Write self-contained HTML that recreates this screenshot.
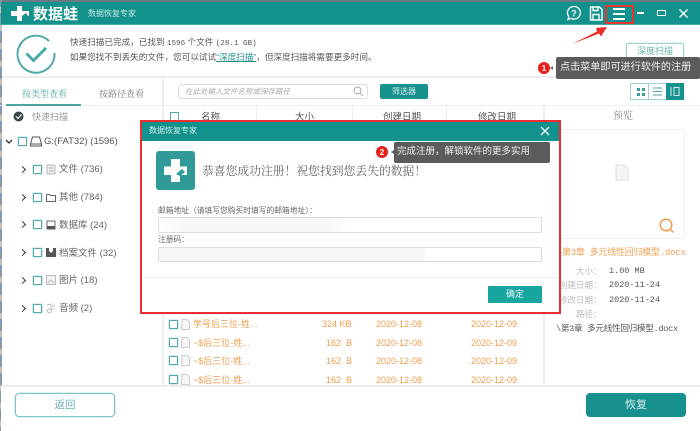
<!DOCTYPE html>
<html lang="zh-CN"><head><meta charset="utf-8"><style>
*{box-sizing:border-box;margin:0;padding:0}
html,body{width:700px;height:431px;overflow:hidden;background:#fff}
body{position:relative;font-family:"Liberation Sans","Noto Sans CJK SC",sans-serif;color:#666;font-size:9px;line-height:1}
#w{position:absolute;left:0;top:0;width:700px;height:431px;filter:blur(.3px);background:#fff}
.a{position:absolute;white-space:nowrap}
.cb{position:absolute;width:9px;height:9px;border:1px solid #4fabab;box-shadow:0 0 0 .6px rgba(107,185,185,.4);border-radius:1px;background:#fff}
.or{color:#ee9d4e;font-size:9px}
.arrow{position:absolute;width:5px;height:5px;border-right:1.5px solid #333;border-top:1.5px solid #333;transform:rotate(45deg)}
.line{position:absolute;background:#eee}
svg{position:absolute;overflow:visible}
</style></head><body><div id="w">
<div class="a" style="left:0;top:0;width:700px;height:2px;background:#6c7a84"></div>
<div class="a" style="left:0;top:0;width:1.5px;height:431px;background:repeating-linear-gradient(180deg,#8a98a4 0 7px,#c9c2b8 7px 13px,#7d9cc0 13px 18px)"></div>
<div class="a" style="left:1px;top:2px;width:699px;height:22px;background:#12918d"></div>
<div class="a" style="left:1px;top:24px;width:699px;height:1px;background:#3ea9a5"></div>
<svg style="left:10px;top:5px" width="20" height="17" viewBox="0 0 20 17"><path d="M7 1h5v5h7v5h-7v5H7v-5H1V6h6z" fill="#fff"/><path d="M12 11l4-3 2 3-3 3z" fill="#12918d"/></svg>
<div class="a" style="left:33px;top:6px;font-size:15px;font-weight:bold;color:#fff;line-height:17px">数据蛙</div>
<div class="a" style="left:88px;top:9px;font-size:8px;color:#c5e7e5;line-height:9px">数据恢复专家</div>
<svg style="left:566px;top:5px" width="16" height="16" viewBox="0 0 16 16"><path d="M8 1.5a6.3 6.3 0 1 1-3 11.8L2 14.5l.7-3A6.3 6.3 0 0 1 8 1.5z" fill="none" stroke="#fff" stroke-width="1.3"/><text x="8" y="11.5" text-anchor="middle" font-size="9" font-weight="bold" fill="#fff" font-family="Liberation Sans">?</text></svg>
<svg style="left:589px;top:6px" width="14" height="15" viewBox="0 0 14 15"><path d="M1.5 1h9l2.5 2.5V14H1.5zM4 1v3.5h5V1M4 14V8.5h6V14" fill="none" stroke="#fff" stroke-width="1.4"/></svg>
<div class="a" style="left:605px;top:5px;width:29px;height:19px;border:2px solid #e8332f"></div>
<div class="a" style="left:613px;top:8px;width:12px;height:1.5px;background:#fff"></div>
<div class="a" style="left:613px;top:13px;width:12px;height:1.5px;background:#fff"></div>
<div class="a" style="left:613px;top:18px;width:12px;height:1.5px;background:#fff"></div>
<div class="a" style="left:637px;top:12px;width:7px;height:2px;background:#fff"></div>
<div class="a" style="left:657px;top:10px;width:9px;height:6px;border:1.5px solid #fff"></div>
<svg style="left:679px;top:9px" width="9" height="9" viewBox="0 0 9 9"><path d="M.5.5l8 8m0-8l-8 8" stroke="#fff" stroke-width="1.3"/></svg>
<svg style="left:570px;top:22px" width="40" height="24" viewBox="0 0 40 24"><path d="M2 22L27 9.500l-1-3.500L37 5l-6 9.500-2-3z" fill="#ec2e28"/></svg>

<svg style="left:15px;top:33px" width="42" height="42" viewBox="0 0 42 42"><path d="M34 8A18.500 18.500 0 1 0 39.500 20" fill="none" stroke="#4ba9a8" stroke-width="2"/><path d="M11.500 20.500l7 7L31 15" fill="none" stroke="#4ba9a8" stroke-width="3"/></svg>
<div class="a" style="left:70px;top:37px;font-size:8.6px;line-height:10px;color:#555">快速扫描已完成，已找到 <span style="font-family:'Liberation Mono';font-size:7.6px">1596</span> 个文件 <span style="font-family:'Liberation Mono';font-size:7.6px">(28.1 GB)</span></div>
<div class="a" style="left:70px;top:52px;font-size:8.6px;line-height:10px;color:#555">如果您找不到丢失的文件，您可以试试<span style="color:#1f908c;text-decoration:underline">“深度扫描”</span>，但深度扫描将需要更多时间。</div>
<div class="a" style="left:626px;top:43px;width:58px;height:16px;border:1px solid #9fd2d1;box-shadow:0 0 0 .5px rgba(159,210,209,.5);border-radius:2px;text-align:center;line-height:14px;font-size:9px;color:#6cb3b1">深度扫描</div>

<div class="line" style="left:2px;top:76px;width:698px;height:2px"></div>
<div class="line" style="left:162px;top:78px;width:2px;height:308px"></div>
<svg style="left:537px;top:61px" width="20" height="14" viewBox="0 0 20 14"><circle cx="7" cy="7" r="6" fill="#e71f1b"/><text x="7" y="10" font-size="8" font-weight="bold" fill="#fff" text-anchor="middle" font-family="Liberation Sans">1</text><path d="M16 5l-3 2 3 2z" fill="#666"/></svg>
<div class="a" style="left:556px;top:57px;width:144px;height:22px;background:#5b5b5b;border-radius:2px;color:#f1f1f1;font-size:10.1px;line-height:21px;padding-left:4px">点击菜单即可进行软件的注册</div>

<div class="a" style="left:22px;top:89px;font-size:9px;line-height:11px;color:#4ea5a3;font-family:'Liberation Serif','Noto Serif CJK SC',serif">按类型查看</div>
<div class="a" style="left:99px;top:89px;font-size:9px;line-height:11px;color:#777;font-family:'Liberation Serif','Noto Serif CJK SC',serif">按路径查看</div>
<div class="line" style="left:0;top:105px;width:700px;height:1px"></div>
<div class="a" style="left:6px;top:104px;width:75px;height:2px;background:#4ba5a3"></div>
<div class="line" style="left:256px;top:106px;width:1px;height:16px"></div>

<div class="a" style="left:178px;top:84px;width:190px;height:15px;border:1px solid #ddd;border-radius:3px;padding-left:6px;font-size:7.5px;line-height:13px;color:#aaa;font-style:italic">在此处输入文件名称或保存路径</div>
<svg style="left:353px;top:86px" width="11" height="11" viewBox="0 0 11 11"><circle cx="4.500" cy="4.500" r="3.500" fill="none" stroke="#aaa"/><path d="M7 7l3 3" stroke="#aaa"/></svg>
<div class="a" style="left:380px;top:84px;width:48px;height:15px;background:#17918d;border-radius:2px;text-align:center;font-size:8px;line-height:15px;color:#d6efee">筛选器</div>
<div class="a" style="left:630px;top:83px;width:54px;height:17px;border:1px solid #9fd2d1"></div>
<div class="a" style="left:666px;top:83px;width:18px;height:17px;background:#17918d"></div>
<div class="a" style="left:648px;top:83px;width:1px;height:17px;background:#9fd2d1"></div>
<svg style="left:636px;top:87px" width="10" height="10" viewBox="0 0 10 10"><path d="M1 1h3v3H1zM6 1h3v3H6zM1 6h3v3H1zM6 6h3v3H6z" fill="#3c9f9c"/></svg>
<svg style="left:652px;top:87px" width="11" height="9" viewBox="0 0 11 9"><path d="M1 1h9M1 4.500h9M1 8h9" stroke="#4ea5a3"/></svg>
<svg style="left:670px;top:87px" width="10" height="9" viewBox="0 0 10 9"><path d="M1 0v9M4 .5h5v8H4z" fill="none" stroke="#d6f0ef"/></svg>

<!-- table header -->
<div class="a" style="left:170px;top:112px;width:9px;height:10px;border:1px solid #4fabab;background:#fff"></div>
<div class="a" style="left:201px;top:113px;font-size:9.5px;line-height:10px;color:#555">名称</div>
<div class="a" style="left:295px;top:113px;font-size:9.5px;line-height:10px;color:#555">大小</div>
<div class="a" style="left:383px;top:113px;font-size:9.5px;line-height:10px;color:#555">创建日期</div>
<div class="a" style="left:478px;top:113px;font-size:9.5px;line-height:10px;color:#555">修改日期</div>
<div class="a" style="left:613px;top:111px;font-size:10px;line-height:12px;color:#888;font-family:'Liberation Serif','Noto Serif CJK SC',serif">预览</div>
<div class="line" style="left:543px;top:106px;width:2px;height:280px"></div>
<div class="line" style="left:446px;top:106px;width:1px;height:16px"></div>
<div class="line" style="left:352px;top:106px;width:1px;height:16px"></div>

<!-- sidebar -->
<svg style="left:13px;top:111px" width="11" height="11" viewBox="0 0 11 11"><circle cx="5.500" cy="5.500" r="5" fill="#3c4a50"/><path d="M3 5.500l2 2 3.500-4" fill="none" stroke="#fff"/></svg>
<div class="a" style="left:32px;top:112px;font-size:9px;line-height:10px;color:#999">快速扫描</div>
<svg style="left:5px;top:139px" width="8" height="6" viewBox="0 0 8 6"><path d="M1 1l3 3 3-3" fill="none" stroke="#333" stroke-width="1.300"/></svg>
<div class="cb" style="left:18px;top:137px"></div>
<svg style="left:30px;top:136px" width="12" height="11" viewBox="0 0 12 11"><path d="M2.500 1h7l2 7v2H.500V8zM1 8h10" fill="none" stroke="#555"/></svg>
<div class="a" style="left:44px;top:136px;font-size:9.5px;line-height:11px;color:#555">G:(FAT32) (1596)</div>

<div class="arrow" style="left:20px;top:167px"></div><div class="cb" style="left:33px;top:165px"></div>
<svg style="left:46px;top:164px" width="10" height="11" viewBox="0 0 10 11"><path d="M1 1h8v9H1z" fill="#eee" stroke="#bbb"/><path d="M3 4h4M3 7h4" stroke="#aaa"/></svg>
<div class="a" style="left:59px;top:164px;font-size:9.5px;line-height:11px">文件 (736)</div>

<div class="arrow" style="left:20px;top:195px"></div><div class="cb" style="left:33px;top:193px"></div>
<svg style="left:46px;top:193px" width="10" height="9" viewBox="0 0 10 9"><path d="M.5 1.500h3l1 1h5v6h-9z" fill="#fff" stroke="#666"/></svg>
<div class="a" style="left:59px;top:192px;font-size:9.5px;line-height:11px">其他 (784)</div>

<div class="arrow" style="left:20px;top:222px"></div><div class="cb" style="left:33px;top:220px"></div>
<svg style="left:46px;top:220px" width="10" height="10" viewBox="0 0 10 10"><path d="M1 1h8v8H1z" fill="#fff" stroke="#666"/><path d="M1 6h8v3H1z" fill="#555"/></svg>
<div class="a" style="left:59px;top:220px;font-size:9.5px;line-height:11px">数据库 (24)</div>

<div class="arrow" style="left:20px;top:250px"></div><div class="cb" style="left:33px;top:248px"></div>
<svg style="left:46px;top:247px" width="10" height="10" viewBox="0 0 10 10"><path d="M0 1h10v9H0z" fill="#555"/><path d="M3 1h4v3L5 6 3 4z" fill="#fff"/></svg>
<div class="a" style="left:59px;top:248px;font-size:9.5px;line-height:11px">档案文件 (32)</div>

<div class="arrow" style="left:20px;top:278px"></div><div class="cb" style="left:33px;top:276px"></div>
<svg style="left:46px;top:275px" width="10" height="10" viewBox="0 0 10 10"><path d="M.5.500h9v9h-9z" fill="#f2f2f2" stroke="#bbb"/><path d="M2 8l3-3 3 3" fill="none" stroke="#bbb"/></svg>
<div class="a" style="left:59px;top:275px;font-size:9.5px;line-height:11px">图片 (18)</div>

<div class="arrow" style="left:20px;top:306px"></div><div class="cb" style="left:33px;top:304px"></div>
<svg style="left:46px;top:303px" width="10" height="11" viewBox="0 0 10 11"><path d="M1 2l4-1v6M6 3h3M6 6h2" fill="none" stroke="#bbb"/><circle cx="3.500" cy="8" r="2" fill="none" stroke="#bbb"/></svg>
<div class="a" style="left:59px;top:303px;font-size:9.5px;line-height:11px">音频 (2)</div>

<!-- preview -->
<div class="a" style="left:555px;top:129px;width:130px;height:110px;border:1px solid #eee;border-radius:4px"></div>
<svg style="left:615px;top:164px" width="14" height="17" viewBox="0 0 14 17"><path d="M1 1h8l4 4v11H1z" fill="#f5f5f5" stroke="#ddd"/></svg>
<svg style="left:659px;top:218px" width="16" height="16" viewBox="0 0 16 16"><circle cx="7" cy="7" r="5.800" fill="none" stroke="#ee9d4e" stroke-width="1.500"/><path d="M11 11l3.500 3.500" stroke="#ee9d4e" stroke-width="1.500"/></svg>
<div class="a" style="left:562px;top:248px;font-size:9px;line-height:10px;color:#efa255;font-family:'Liberation Mono','Noto Sans CJK SC',monospace;letter-spacing:-.25px">第3章 多元线性回归模型.docx</div>
<div class="a" style="left:576px;top:267px;font-size:8.5px;line-height:9px;color:#bbb">大小：</div>
<div class="a" style="left:559px;top:281px;font-size:8.5px;line-height:9px;color:#bbb">创建日期：</div>
<div class="a" style="left:559px;top:296px;font-size:8.5px;line-height:9px;color:#bbb">修改日期：</div>
<div class="a" style="left:576px;top:310px;font-size:8.5px;line-height:9px;color:#bbb">路径：</div>
<div class="a" style="left:609px;top:267px;font-size:8.5px;line-height:9px;font-family:'Liberation Mono',monospace;color:#555">1.00 MB</div>
<div class="a" style="left:609px;top:281px;font-size:8.5px;line-height:9px;font-family:'Liberation Mono',monospace;color:#555">2020-11-24</div>
<div class="a" style="left:609px;top:296px;font-size:8.5px;line-height:9px;font-family:'Liberation Mono',monospace;color:#555">2020-11-24</div>
<div class="a" style="left:556px;top:324px;font-size:8.6px;line-height:10px;font-family:'Liberation Mono','Noto Sans CJK SC',monospace;color:#555;letter-spacing:-.3px">\第3章 多元线性回归模型.docx</div>

<!-- rows -->
<div class="cb" style="left:169px;top:320px"></div>
<svg style="left:181px;top:319px" width="9" height="11" viewBox="0 0 9 11"><path d="M1 .5h5l2.500 2.500v7.500H.500z" fill="#f6f6f6" stroke="#ccc"/></svg>
<div class="a or" style="left:193px;top:319px;line-height:11px">学号后三位-姓...</div>
<div class="a or" style="left:322px;top:319px;line-height:11px">324 KB</div>
<div class="a or" style="left:376px;top:319px;line-height:11px">2020-12-08</div>
<div class="a or" style="left:471px;top:319px;line-height:11px">2020-12-09</div>

<div class="cb" style="left:169px;top:338px"></div>
<svg style="left:181px;top:337px" width="9" height="11" viewBox="0 0 9 11"><path d="M1 .5h5l2.500 2.500v7.500H.500z" fill="#f6f6f6" stroke="#ccc"/></svg>
<div class="a or" style="left:193px;top:338px;line-height:11px">~$后三位-姓...</div>
<div class="a or" style="left:326px;top:338px;line-height:11px">162&nbsp; B</div>
<div class="a or" style="left:376px;top:338px;line-height:11px">2020-12-08</div>
<div class="a or" style="left:471px;top:338px;line-height:11px">2020-12-09</div>

<div class="cb" style="left:169px;top:356px"></div>
<svg style="left:181px;top:355px" width="9" height="11" viewBox="0 0 9 11"><path d="M1 .5h5l2.500 2.500v7.500H.500z" fill="#f6f6f6" stroke="#ccc"/></svg>
<div class="a or" style="left:193px;top:356px;line-height:11px">~$后三位-姓...</div>
<div class="a or" style="left:326px;top:356px;line-height:11px">162&nbsp; B</div>
<div class="a or" style="left:376px;top:356px;line-height:11px">2020-12-08</div>
<div class="a or" style="left:471px;top:356px;line-height:11px">2020-12-09</div>

<div class="cb" style="left:169px;top:375px"></div>
<svg style="left:181px;top:374px" width="9" height="11" viewBox="0 0 9 11"><path d="M1 .5h5l2.500 2.500v7.500H.500z" fill="#f6f6f6" stroke="#ccc"/></svg>
<div class="a or" style="left:193px;top:375px;line-height:11px">~$后三位-姓...</div>
<div class="a or" style="left:326px;top:375px;line-height:11px">162&nbsp; B</div>
<div class="a or" style="left:376px;top:375px;line-height:11px">2020-12-08</div>
<div class="a or" style="left:471px;top:375px;line-height:11px">2020-12-09</div>

<!-- footer -->
<div class="a" style="left:1px;top:386px;width:699px;height:45px;background:#fff"></div>
<div class="line" style="left:2px;top:385px;width:698px;height:2px"></div>
<div class="a" style="left:15px;top:393px;width:100px;height:24px;border:1px solid #7cc4c3;box-shadow:0 0 0 .5px rgba(124,196,195,.5);border-radius:4px;text-align:center;font-size:10.5px;line-height:23px;color:#6fb1b0">返回</div>
<div class="a" style="left:586px;top:393px;width:100px;height:24px;background:#17918d;border-radius:4px;text-align:center;font-size:11px;line-height:24px;color:#d8f0ef">恢复</div>

<!-- dialog -->
<div class="a" style="left:140px;top:120px;width:421px;height:194px;background:#fff;border:2px solid #ec2e33"></div>
<div class="a" style="left:142px;top:122px;width:417px;height:19px;background:#12918d"></div>
<div class="a" style="left:149px;top:126px;font-size:8px;line-height:10px;color:#d0ecea">数据恢复专家</div>
<svg style="left:540px;top:126px" width="10" height="10" viewBox="0 0 10 10"><path d="M1 1l8 8m0-8l-8 8" stroke="#fff" stroke-width="1.300"/></svg>
<div class="a" style="left:156px;top:151px;width:39px;height:39px;background:#2f9a98;border-radius:3px"></div>
<svg style="left:162px;top:157px" width="27" height="27" viewBox="0 0 27 27"><path d="M9 2h9v7.500h7v8.500h-7v7H9v-7H2V9.500h7z" fill="#fff"/><path d="M14 17l6-5 3 3-5 4z" fill="#2f9a98"/></svg>
<div class="a" style="left:202px;top:164px;font-size:11.8px;line-height:14px;color:#666;font-family:'Liberation Serif','Noto Serif CJK SC',serif">恭喜您成功注册！祝您找到您丢失的数据！</div>
<svg style="left:375px;top:145px" width="20" height="14" viewBox="0 0 20 14"><circle cx="7" cy="7" r="6" fill="#e71f1b"/><text x="7" y="10" font-size="8" font-weight="bold" fill="#fff" text-anchor="middle" font-family="Liberation Sans">2</text><path d="M19 5l-3 2 3 2z" fill="#666"/></svg>
<div class="a" style="left:394px;top:142px;width:156px;height:21px;background:#5b5b5b;border-radius:2px;color:#f1f1f1;font-size:9.5px;line-height:20px;padding-left:3px">完成注册，解锁软件的更多实用</div>
<div class="a" style="left:158px;top:206px;font-size:7.75px;line-height:10px;color:#666">邮箱地址（请填写您购买时填写的邮箱地址）：</div>
<div class="a" style="left:158px;top:217px;width:384px;height:16px;border:1px solid #ddd;border-radius:2px;background:#fff"></div>
<div class="a" style="left:159px;top:218px;width:188px;height:14px;background:linear-gradient(90deg,#fff,#f7f7f7 15%,#f7f7f7 90%,#fff)"></div>
<div class="a" style="left:158px;top:235px;font-size:7.75px;line-height:10px;color:#666">注册码：</div>
<div class="a" style="left:158px;top:247px;width:384px;height:15px;border:1px solid #ddd;border-radius:2px;background:#fff"></div>
<div class="a" style="left:159px;top:248px;width:266px;height:13px;background:#f7f7f7"></div>
<div class="line" style="left:143px;top:277px;width:415px;height:1px"></div>
<div class="a" style="left:488px;top:286px;width:54px;height:17px;background:#17a5a0;border-radius:1px;text-align:center;font-size:9px;line-height:17px;color:#e4f6f5">确定</div>
</div></body></html>
